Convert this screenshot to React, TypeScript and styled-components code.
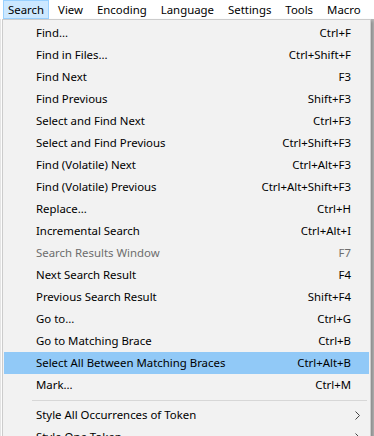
import React from "react";
import styled, { createGlobalStyle } from "styled-components";

const Global = createGlobalStyle`
  html, body { margin: 0; padding: 0; background: #ffffff; }
  body { width: 374px; height: 436px; overflow: hidden; font-family: "Segoe UI", "Noto Sans", "Open Sans", sans-serif; }
`;

const Page = styled.div`
  display: flex;
  flex-direction: column;
  width: 374px;
  height: 436px;
  overflow: hidden;
`;

const MenuBar = styled.div`
  display: flex;
  align-items: stretch;
  height: 19px;
  padding-left: 3px;
  background: #ffffff;
  font-size: 11.4px;
  color: #000;
  white-space: nowrap;
  overflow: hidden;
`;

const BarItem = styled.div<{ $active?: boolean }>`
  display: flex;
  align-items: center;
  flex-shrink: 0;
  padding: 0 ${(p) => (p.$active ? 4 : 6)}px;
  border: 1px solid ${(p) => (p.$active ? "#99d1ff" : "transparent")};
  background: ${(p) => (p.$active ? "#cce8ff" : "transparent")};
  box-sizing: border-box;
  height: 19px;
  margin-right: ${(p) => (p.$active ? 2 : 0)}px;
`;

const Editor = styled.div`
  position: relative;
  flex: 1;
  background: #ffffff;
  display: flex;
`;

const Gutter = styled.div`
  width: 2px;
  background: linear-gradient(#e4e4e4, #e4e4e4) 0 0 / 1px 100% no-repeat, #ffffff;
`;

const TextArea = styled.div`
  flex: 1;
`;

const RightStrip = styled.div`
  width: 3px;
  background: #b9b9b9;
`;

const Dropdown = styled.div`
  position: absolute;
  top: 0;
  left: 2px;
  width: 369px;
  box-sizing: border-box;
  background: #f2f2f2;
  border: 1px solid #cccccc;
  padding: 2px 1px;
  font-size: 11.4px;
  box-shadow: 2px 2px 3px rgba(0, 0, 0, 0.25);
`;

const Row = styled.div<{ $highlight?: boolean; $disabled?: boolean }>`
  display: grid;
  grid-template-columns: 1fr auto 18px;
  align-items: center;
  height: 22px;
  padding-left: 32px;
  background: ${(p) => (p.$highlight ? "#91c9f7" : "transparent")};
  color: ${(p) => (p.$disabled ? "#6d6d6d" : "#000000")};
  white-space: nowrap;
  line-height: 20px;
`;

const Label = styled.span``;

const Shortcut = styled.span`
  text-align: right;
  padding-left: 20px;
`;

const Arrow = styled.span`
  display: flex;
  align-items: center;
  padding-left: 4px;
  color: #333;
`;

const Separator = styled.div`
  height: 8px;
  display: flex;
  align-items: center;
  padding: 0 2px 0 28px;
  &::after {
    content: "";
    flex: 1;
    height: 1px;
    background: #d7d7d7;
  }
`;

type Item = { label: string; shortcut?: string; disabled?: boolean; highlight?: boolean; sub?: boolean } | "sep";

const items: Item[] = [
  { label: "Find...", shortcut: "Ctrl+F" },
  { label: "Find in Files...", shortcut: "Ctrl+Shift+F" },
  { label: "Find Next", shortcut: "F3" },
  { label: "Find Previous", shortcut: "Shift+F3" },
  { label: "Select and Find Next", shortcut: "Ctrl+F3" },
  { label: "Select and Find Previous", shortcut: "Ctrl+Shift+F3" },
  { label: "Find (Volatile) Next", shortcut: "Ctrl+Alt+F3" },
  { label: "Find (Volatile) Previous", shortcut: "Ctrl+Alt+Shift+F3" },
  { label: "Replace...", shortcut: "Ctrl+H" },
  { label: "Incremental Search", shortcut: "Ctrl+Alt+I" },
  { label: "Search Results Window", shortcut: "F7", disabled: true },
  { label: "Next Search Result", shortcut: "F4" },
  { label: "Previous Search Result", shortcut: "Shift+F4" },
  { label: "Go to...", shortcut: "Ctrl+G" },
  { label: "Go to Matching Brace", shortcut: "Ctrl+B" },
  { label: "Select All Between Matching Braces", shortcut: "Ctrl+Alt+B", highlight: true },
  { label: "Mark...", shortcut: "Ctrl+M" },
  "sep",
  { label: "Style All Occurrences of Token", sub: true },
  { label: "Style One Token", sub: true },
];

const Chevron = () => (
  <svg width="5" height="9" viewBox="0 0 5 9">
    <path d="M0.5 0.5 L4.5 4.5 L0.5 8.5" fill="none" stroke="#444" strokeWidth="1" />
  </svg>
);

const bar = ["Search", "View", "Encoding", "Language", "Settings", "Tools", "Macro", "Run"];

export default function App() {
  return (
    <Page>
      <Global />
      <MenuBar>
        {bar.map((b, i) => (
          <BarItem key={b} $active={i === 0}>
            {b}
          </BarItem>
        ))}
      </MenuBar>
      <Editor>
        <Gutter />
        <TextArea />
        <RightStrip />
        <Dropdown>
          {items.map((it, i) =>
            it === "sep" ? (
              <Separator key={i} />
            ) : (
              <Row key={i} $highlight={it.highlight} $disabled={it.disabled}>
                <Label>{it.label}</Label>
                <Shortcut>{it.shortcut ?? ""}</Shortcut>
                <Arrow>{it.sub ? <Chevron /> : null}</Arrow>
              </Row>
            )
          )}
        </Dropdown>
      </Editor>
    </Page>
  );
}
